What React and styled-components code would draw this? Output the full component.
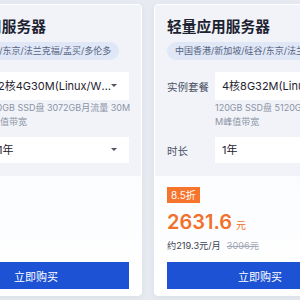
import React from 'react';
import styled, { createGlobalStyle } from 'styled-components';

const GlobalStyle = createGlobalStyle`
    html, body {
        margin: 0;
        padding: 0;
        background: #e7eaf0;
        overflow: hidden;
    }
    body {
        font-family: "Inter", "Noto Sans CJK SC", sans-serif;
    }
`;

const Viewport = styled.div`
    width: 300px;
    height: 300px;
    overflow: hidden;
`;

// carousel track, scrolled so the first card is half out of view
const Track = styled.div`
    display: flex;
    gap: 12px;
    padding-top: 4px;
    margin-left: -70px;
`;

const Card = styled.div`
    flex: 0 0 212px;
    height: 292px;
    box-sizing: border-box;
    border: 1px solid #ffffff;
    border-radius: 4px;
    background: #fbfcfe;
    box-shadow: 0 2px 6px rgba(40, 60, 100, 0.06);
    display: flex;
    flex-direction: column;
    overflow: hidden;
`;

const Upper = styled.div`
    background: #f1f3f8;
    padding: 12px 12px 13px;
    display: flex;
    flex-direction: column;
`;

const Title = styled.h3`
    margin: 0;
    font-size: 14.7px;
    line-height: 20px;
    font-weight: 600;
    color: #1d2230;
    white-space: nowrap;
`;

const Regions = styled.div`
    align-self: flex-start;
    margin-top: 5px;
    height: 18px;
    line-height: 18px;
    padding: 0 8px;
    border-radius: 9px;
    background: #e0e7f7;
    color: #56647f;
    font-size: 9px;
    white-space: nowrap;
`;

const Row = styled.div`
    display: flex;
    align-items: center;
    margin-top: ${p => p.$top}px;
`;

const Label = styled.span`
    flex: 0 0 48px;
    font-size: 10.5px;
    color: #4a5163;
`;

const Select = styled.div`
    position: relative;
    flex: 1;
    min-width: 0;
    height: ${p => p.$h}px;
    line-height: ${p => p.$h}px;
    background: #ffffff;
    padding: 0 17px 0 7px;
    font-size: 11px;
    color: #1f2330;
    white-space: nowrap;
    overflow: hidden;
    text-overflow: ellipsis;

    &::after {
        content: '';
        position: absolute;
        right: 12px;
        top: 50%;
        margin-top: -2px;
        border-left: 3px solid transparent;
        border-right: 3px solid transparent;
        border-top: 3.5px solid #4d5262;
    }
`;

const Desc = styled.p`
    margin: 1px -2px 0 48px;
    font-size: 9px;
    line-height: 14px;
    color: #8c94a6;
    word-break: break-all;
`;

const Lower = styled.div`
    flex: 1;
    padding: 11px 12px 0;
    display: flex;
    flex-direction: column;
    align-items: flex-start;
    background: linear-gradient(#fbfcfe, #ffffff);
`;

const Discount = styled.span`
    height: 16px;
    line-height: 16px;
    padding: 0 4px;
    background: #f7742c;
    color: #ffffff;
    font-size: 10px;
`;

const Price = styled.div`
    margin-top: 7px;
    color: #f2702a;
    font-size: 20px;
    line-height: 24px;
    font-weight: 600;

    small {
        margin-left: 4px;
        font-size: 10px;
        font-weight: 400;
    }
`;

const Monthly = styled.div`
    margin-top: 2px;
    font-size: 9.2px;
    line-height: 14px;
    color: #3c4150;

    s {
        margin-left: 6px;
        color: #a3a9b6;
    }
`;

const BuyButton = styled.button`
    margin-top: 9px;
    align-self: stretch;
    height: 27px;
    border: none;
    border-radius: 0;
    background: #1c52d3;
    color: #ffffff;
    font-family: inherit;
    font-size: 11px;
`;

const products = [
    {
        regions: '新加坡/硅谷/东京/法兰克福/孟买/多伦多',
        spec: '2核4G30M(Linux/Windows)',
        desc: '80GB SSD盘 3072GB月流量 30M峰值带宽',
        price: '852',
        monthly: '约71元/月',
        discount: '8.5折',
    },
    {
        regions: '中国香港/新加坡/硅谷/东京/法兰克福/孟买/多伦多',
        spec: '4核8G32M(Linux/Windows)',
        desc: '120GB SSD盘 5120GB月流量 32M峰值带宽',
        price: '2631.6',
        monthly: '约219.3元/月',
        origin: '3096元',
        discount: '8.5折',
    },
];

const ProductCard = ({ item }) => (
    <Card>
        <Upper>
            <Title>轻量应用服务器</Title>
            <Regions>{item.regions}</Regions>
            <Row $top={12}>
                <Label>实例套餐</Label>
                <Select $h={28}>{item.spec}</Select>
            </Row>
            <Desc>{item.desc}</Desc>
            <Row $top={8}>
                <Label>时长</Label>
                <Select $h={26}>1年</Select>
            </Row>
        </Upper>
        <Lower>
            <Discount>{item.discount}</Discount>
            <Price>{item.price}<small>元</small></Price>
            <Monthly>
                {item.monthly}
                {item.origin && <s>{item.origin}</s>}
            </Monthly>
            <BuyButton>立即购买</BuyButton>
        </Lower>
    </Card>
);

export default function App() {
    return (
        <Viewport>
            <GlobalStyle />
            <Track>
                {products.map((p, i) => <ProductCard key={i} item={p} />)}
            </Track>
        </Viewport>
    );
}
